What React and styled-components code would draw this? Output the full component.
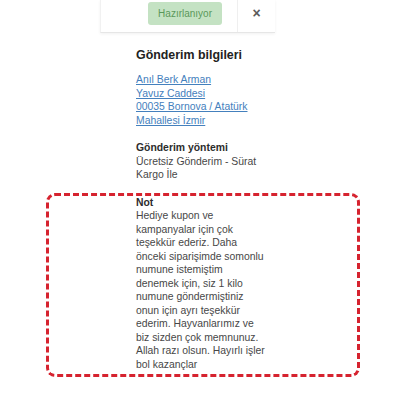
import React from "react";
import styled, { createGlobalStyle } from "styled-components";

const GlobalStyle = createGlobalStyle`
  html, body { margin: 0; padding: 0; background: #ffffff; }
  body { font-family: "Liberation Sans", Arial, sans-serif; }
`;

const Page = styled.div`
  width: 400px;
  height: 400px;
  overflow: hidden;
  display: flex;
  flex-direction: column;
  background: #ffffff;
`;

const Header = styled.div`
  margin-left: 100px;
  width: 175px;
  height: 33px;
  box-sizing: border-box;
  display: flex;
  justify-content: flex-end;
  align-items: stretch;
  border-left: 1px solid #f1f1f1;
  border-bottom: 1px solid #e6e6e6;
  box-shadow: 0 1px 3px rgba(0, 0, 0, 0.06);
`;

const StatusBadge = styled.div`
  margin-top: 2px;
  margin-right: 15px;
  height: 23px;
  padding: 0 10px;
  box-sizing: border-box;
  display: flex;
  align-items: center;
  background: #c4e2c3;
  color: #5a985a;
  font-size: 10px;
  border-radius: 3px;
`;

const CloseButton = styled.div`
  width: 38px;
  border-left: 1px solid #efefef;
  display: flex;
  justify-content: center;
  align-items: flex-start;
  padding-top: 5px;
  box-sizing: border-box;
  color: #5a5a5a;
  font-size: 14px;
  font-weight: bold;
`;

const Body = styled.div`
  padding-left: 136px;
  display: flex;
  flex-direction: column;
  color: #474747;
  font-size: 10.4px;
  line-height: 13.5px;
`;

const Title = styled.h2`
  margin: 15px 0 0;
  font-size: 12.4px;
  line-height: 15px;
  font-weight: bold;
  color: #222;
`;

const LinkList = styled.div`
  margin-top: 10px;
  display: flex;
  flex-direction: column;
`;

const AddressLink = styled.a`
  color: #4480bd;
  text-decoration: underline;
  text-underline-offset: 1px;
  align-self: flex-start;
`;

const Section = styled.div`
  margin-top: ${(p) => p.$gap || 0}px;
  white-space: pre-line;
`;

const Label = styled.div`
  font-weight: bold;
  color: #2c2c2c;
`;

const NoteBox = styled.div`
  margin: 11px 0 0 -90px;
  width: 314px;
  box-sizing: border-box;
  padding: 0 0 2.5px 87px;
  border: 3px dashed #d6232f;
  border-radius: 9px;
  white-space: pre-line;
`;

const noteText = `Hediye kupon ve
kampanyalar için çok
teşekkür ederiz. Daha
önceki siparişimde somonlu
numune istemiştim
denemek için, siz 1 kilo
numune göndermiştiniz
onun için ayrı teşekkür
ederim. Hayvanlarımız ve
biz sizden çok memnunuz.
Allah razı olsun. Hayırlı işler
bol kazançlar`;

export default function App() {
  return (
    <Page>
      <GlobalStyle />
      <Header>
        <StatusBadge>Hazırlanıyor</StatusBadge>
        <CloseButton>×</CloseButton>
      </Header>
      <Body>
        <Title>Gönderim bilgileri</Title>
        <LinkList>
          <AddressLink href="#">Anıl Berk Arman</AddressLink>
          <AddressLink href="#">Yavuz Caddesi</AddressLink>
          <AddressLink href="#">00035 Bornova / Atatürk</AddressLink>
          <AddressLink href="#">Mahallesi İzmir</AddressLink>
        </LinkList>
        <Section $gap={14}>
          <Label>Gönderim yöntemi</Label>
          {"Ücretsiz Gönderim - Sürat\nKargo İle"}
        </Section>
        <NoteBox>
          <Label>Not</Label>
          {noteText}
        </NoteBox>
      </Body>
    </Page>
  );
}
